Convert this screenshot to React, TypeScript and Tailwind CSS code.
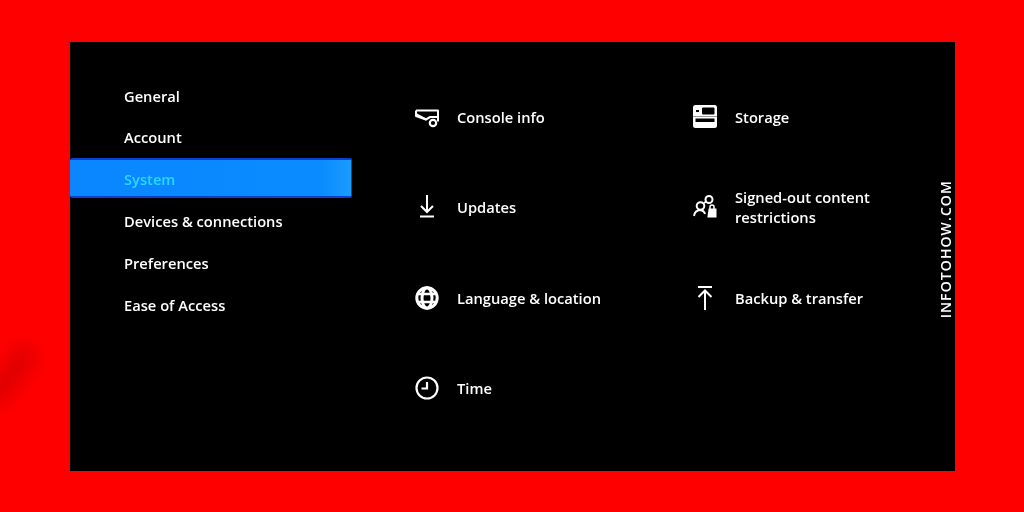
const FONT = "font-['Open_Sans','Noto_Sans',sans-serif]";

const NAV = ["General", "Account", "System", "Devices & connections", "Preferences", "Ease of Access"];

const ConsoleIcon = () => (
  <svg width="24" height="24" viewBox="0 0 24 24" fill="none" stroke="white" strokeWidth="2">
    <path d="M1 5.500h22v11M1 5.500v5.500l10 3.500" strokeLinejoin="round" />
    <path d="M1.500 9.500 11 14.500 15 12h7" strokeWidth="2.200" />
    <circle cx="18" cy="18" r="3.200" strokeWidth="2.200" />
  </svg>
);

const StorageIcon = () => (
  <svg width="24" height="24" viewBox="0 0 24 24">
    <rect x="0" y="0" width="24" height="23" rx="2.500" fill="white" />
    <rect x="9" y="2.500" width="12.500" height="7" rx="1" fill="black" />
    <rect x="3" y="5" width="3" height="2" fill="black" />
    <rect x="2.500" y="13.500" width="19" height="3.500" fill="black" />
    <rect x="0" y="11" width="24" height="0.800" fill="black" opacity="0.5" />
  </svg>
);

const DownloadIcon = () => (
  <svg width="24" height="24" viewBox="0 0 24 24" fill="none" stroke="white" strokeWidth="2">
    <path d="M12 0v17M6 11l6 6 6-6M5 21.500h14" />
  </svg>
);

const UploadIcon = () => (
  <svg width="24" height="24" viewBox="0 0 24 24" fill="none" stroke="white" strokeWidth="2">
    <path d="M5 1h14M12 24V4.500M5.500 11 12 4.500l6.500 6.500" />
  </svg>
);

const RestrictIcon = () => (
  <svg width="24" height="24" viewBox="0 0 24 24" fill="none" stroke="white" strokeWidth="2">
    <circle cx="16" cy="4.500" r="3.500" />
    <circle cx="7.500" cy="11" r="3.800" />
    <path d="M1 21c.5-3.500 2-5.500 6-6 3 .5 4.500 2 5 4M11 8l2.500-1.500" />
    <path d="M16.500 14.500h6v7h-7z" fill="white" />
    <path d="M17 14v-2a2 2 0 0 1 4 0v2" strokeWidth="1.500" />
  </svg>
);

const GlobeIcon = () => (
  <svg width="24" height="24" viewBox="0 0 24 24" fill="none" stroke="white" strokeWidth="3">
    <circle cx="12" cy="12" r="10.200" />
    <ellipse cx="12" cy="12" rx="5" ry="10.200" />
    <path d="M2 8h20M2 16h20" strokeWidth="2.500" />
  </svg>
);

const ClockIcon = () => (
  <svg width="24" height="24" viewBox="0 0 24 24" fill="none" stroke="white" strokeWidth="2.200">
    <circle cx="12" cy="12" r="10.500" />
    <path d="M12 6v6.500H6.500" />
  </svg>
);

const ITEMS = [
  { icon: ConsoleIcon, label: "Console info" },
  { icon: StorageIcon, label: "Storage" },
  { icon: DownloadIcon, label: "Updates" },
  { icon: RestrictIcon, label: "Signed-out content restrictions" },
  { icon: GlobeIcon, label: "Language & location" },
  { icon: UploadIcon, label: "Backup & transfer" },
  { icon: ClockIcon, label: "Time" },
];

export default function App() {
  return (
    <div className={`relative h-[512px] w-[1024px] overflow-hidden bg-[#fe0000] pt-[42px] pl-[70px] ${FONT}`}>
      {/* smudge on the red border */}
      <div className="absolute left-[-24px] top-[362px] h-[26px] w-[70px] -rotate-[55deg] rounded-full bg-[#e20000] blur-[8px]" />

      <div className="flex h-[429px] w-[885px] bg-black text-white">
        {/* Sidebar */}
        <nav className="w-[282px] shrink-0 pt-[33px] text-[14.700px] font-semibold leading-5">
          {NAV.map((label) =>
            label === "System" ? (
              <div
                key={label}
                className="mb-[2.500px] flex h-[40px] items-center rounded-[2px] border-y-2 border-r border-[#0a3fd0] bg-linear-to-r from-[#0a86ff] via-[#0a8cff] via-90% to-[#1a9cff] pl-[54px] pt-[2px] text-[#2ad8ff]"
              >
                <span className="blur-[0.4px]">{label}</span>
              </div>
            ) : (
              <div key={label} className="flex h-[41.6px] items-center pl-[54px]">
                <span className="blur-[0.4px]">{label}</span>
              </div>
            ),
          )}
        </nav>

        {/* Settings grid */}
        <div className="grid flex-1 grid-cols-[278px_1fr] auto-rows-[90.5px] content-start pl-[63px] pt-[29.700px] text-[14.700px] font-semibold leading-[20px]">
          {ITEMS.map(({ icon: Icon, label }) => (
            <div key={label} className="flex items-center gap-[18px]">
              <div className="shrink-0 blur-[0.4px]">
                <Icon />
              </div>
              <span className="w-[160px] blur-[0.4px]">{label}</span>
            </div>
          ))}
        </div>

        {/* Watermark */}
        <div className="flex w-[20px] shrink-0 items-center pb-[14px]">
          <span className="rotate-180 text-[14px] font-semibold tracking-[1.100px] text-white blur-[0.3px] [writing-mode:vertical-rl]">
            INFOTOHOW.COM
          </span>
        </div>
      </div>
    </div>
  );
}
